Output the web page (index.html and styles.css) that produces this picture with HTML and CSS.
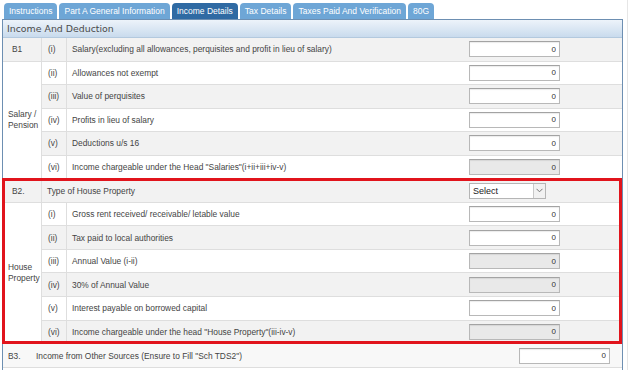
FILE: index.html
```html
<!DOCTYPE html>
<html>
<head>
<meta charset="utf-8">
<link rel="stylesheet" href="styles.css">
</head>
<body>
<div class="page">
  <div class="tabs">
    <div class="tab">Instructions</div>
    <div class="tab">Part A General Information</div>
    <div class="tab active">Income Details</div>
    <div class="tab">Tax Details</div>
    <div class="tab">Taxes Paid And Verification</div>
    <div class="tab">80G</div>
  </div>
  <div class="panel">
    <div class="panel-head">Income And Deduction</div>
    <table class="grid">
      <colgroup><col class="c1"><col class="c2"><col class="c3"><col class="c4"></colgroup>
      <tr class="odd">
        <td class="code">B1</td><td class="num">(i)</td>
        <td class="lbl">Salary(excluding all allowances, perquisites and profit in lieu of salary)</td>
        <td class="val"><input class="amt" type="text" value="0"></td>
      </tr>
      <tr class="even">
        <td class="group" rowspan="5">Salary / Pension</td><td class="num">(ii)</td>
        <td class="lbl">Allowances not exempt</td>
        <td class="val"><input class="amt" type="text" value="0"></td>
      </tr>
      <tr class="odd">
        <td class="num">(iii)</td><td class="lbl">Value of perquisites</td>
        <td class="val"><input class="amt" type="text" value="0"></td>
      </tr>
      <tr class="even">
        <td class="num">(iv)</td><td class="lbl">Profits in lieu of salary</td>
        <td class="val"><input class="amt" type="text" value="0"></td>
      </tr>
      <tr class="odd">
        <td class="num">(v)</td><td class="lbl">Deductions u/s 16</td>
        <td class="val"><input class="amt" type="text" value="0"></td>
      </tr>
      <tr class="even">
        <td class="num">(vi)</td><td class="lbl">Income chargeable under the Head "Salaries"(i+ii+iii+iv-v)</td>
        <td class="val"><input class="amt ro" type="text" value="0" readonly></td>
      </tr>
      <tr class="odd">
        <td class="code">B2.</td>
        <td class="lbl wide" colspan="2">Type of House Property</td>
        <td class="val">
          <div class="select"><span class="sel-text">Select</span><span class="sel-arrow"><svg width="7" height="5" viewBox="0 0 7 5"><path d="M0.5 0.8 L3.5 3.8 L6.5 0.8" fill="none" stroke="#777" stroke-width="1"/></svg></span></div>
        </td>
      </tr>
      <tr class="even">
        <td class="group" rowspan="6">House Property</td><td class="num">(i)</td>
        <td class="lbl">Gross rent received/ receivable/ letable value</td>
        <td class="val"><input class="amt" type="text" value="0"></td>
      </tr>
      <tr class="odd">
        <td class="num">(ii)</td><td class="lbl">Tax paid to local authorities</td>
        <td class="val"><input class="amt" type="text" value="0"></td>
      </tr>
      <tr class="even">
        <td class="num">(iii)</td><td class="lbl">Annual Value (i-ii)</td>
        <td class="val"><input class="amt ro" type="text" value="0" readonly></td>
      </tr>
      <tr class="odd">
        <td class="num">(iv)</td><td class="lbl">30% of Annual Value</td>
        <td class="val"><input class="amt ro" type="text" value="0" readonly></td>
      </tr>
      <tr class="even">
        <td class="num">(v)</td><td class="lbl">Interest payable on borrowed capital</td>
        <td class="val"><input class="amt" type="text" value="0"></td>
      </tr>
      <tr class="odd">
        <td class="num">(vi)</td><td class="lbl">Income chargeable under the head "House Property"(iii-iv-v)</td>
        <td class="val"><input class="amt ro" type="text" value="0" readonly></td>
      </tr>
    </table>
    <div class="row-b3">
      <span class="b3-code">B3.</span>
      <span class="b3-lbl">Income from Other Sources (Ensure to Fill "Sch TDS2")</span>
      <input class="amt" type="text" value="0">
    </div>
    <div class="row-next"></div>
  </div>
  <div class="highlight"></div>
</div>
</body>
</html>
```

FILE: styles.css
```css
html, body {
  margin: 0;
  padding: 0;
  background: #ffffff;
}
body {
  font-family: "Liberation Sans", Arial, sans-serif;
  color: #444;
}
.page {
  position: relative;
  width: 627px;
  height: 370px;
  overflow: hidden;
  border-right: 1px solid #e6e6e6;
}
.tabs {
  display: flex;
  gap: 2px;
  margin-left: 4px;
  padding-top: 3px;
}
.tab {
  height: 16px;
  line-height: 17px;
  padding: 0 5px;
  background: #6ea6d6;
  color: #ffffff;
  font-size: 8.5px;
  border-radius: 4px 4px 0 0;
  white-space: nowrap;
}
.tab.active {
  background: #2f6aa3;
}
.panel {
  margin-left: 2px;
  width: 619px;
  border: 1px solid #6d8fb2;
  border-bottom: none;
  background: #ffffff;
}
.panel-head {
  height: 17px;
  line-height: 17px;
  padding-left: 4px;
  font-family: "DejaVu Sans", Verdana, sans-serif;
  font-size: 9.4px;
  color: #4a4a4a;
  background: linear-gradient(#edf3fa, #c9dbed);
  border-bottom: 1px solid #b3c9de;
}
.grid {
  width: 619px;
  table-layout: fixed;
  border-collapse: separate;
  border-spacing: 0;
  font-size: 8.4px;
}
.c1 { width: 39px; }
.c2 { width: 25px; }
.c3 { width: 402px; }
.c4 { width: 153px; }
.grid tr {
  height: 23.55px;
}
.grid td {
  padding: 0;
  vertical-align: middle;
  border-bottom: 1px solid #dedede;
  white-space: nowrap;
}
.grid tr.odd td { background: #f2f2f2; }
.grid tr.even td { background: #ffffff; }
.grid td.group {
  background: #ffffff;
  white-space: normal;
  padding-left: 5px;
  line-height: 11px;
  border-right: 1px solid #dedede;
}
.grid td.code {
  padding-left: 9px;
  border-right: 1px solid #dedede;
}
.grid td.num {
  padding-left: 6px;
  border-right: 1px solid #dedede;
}
.grid td.lbl {
  padding-left: 5px;
}
.grid td.lbl.wide {
  padding-left: 5px;
}
.grid td.val {
  padding-left: 0;
}
.amt {
  box-sizing: border-box;
  display: block;
  width: 91px;
  height: 16px;
  margin: 0;
  padding: 0 3px 0 0;
  border: 1px solid #b8b8b8;
  border-top-color: #a3a3a3;
  box-shadow: inset 0 1px 1px rgba(0, 0, 0, 0.08);
  background: #ffffff;
  text-align: right;
  font-family: "Liberation Sans", Arial, sans-serif;
  font-size: 8px;
  color: #333;
  outline: none;
}
.amt.ro {
  background: #e9e9e9;
}
.select {
  box-sizing: border-box;
  display: flex;
  align-items: center;
  width: 77px;
  height: 16px;
  border: 1px solid #b5b5b5;
  background: #ffffff;
}
.sel-text {
  flex: 1;
  padding-left: 3px;
  font-size: 9px;
  color: #222;
}
.sel-arrow {
  box-sizing: border-box;
  display: flex;
  align-items: center;
  justify-content: center;
  width: 12px;
  height: 14px;
  border-left: 1px solid #c8c8c8;
  background: #f1f1f1;
}
.row-b3 {
  display: flex;
  align-items: center;
  height: 23px;
  background: #f8f8f8;
  border-bottom: 1px solid #dedede;
  font-size: 8.4px;
}
.b3-code {
  width: 28px;
  padding-left: 5px;
  box-sizing: border-box;
}
.b3-lbl {
  flex: 1;
  padding-left: 5px;
}
.row-b3 .amt {
  margin-right: 12px;
}
.row-next {
  height: 20px;
  background: #ffffff;
}
.highlight {
  position: absolute;
  left: 2px;
  top: 178px;
  width: 620px;
  height: 166px;
  box-sizing: border-box;
  border: 3px solid #e1141c;
  pointer-events: none;
}
```
